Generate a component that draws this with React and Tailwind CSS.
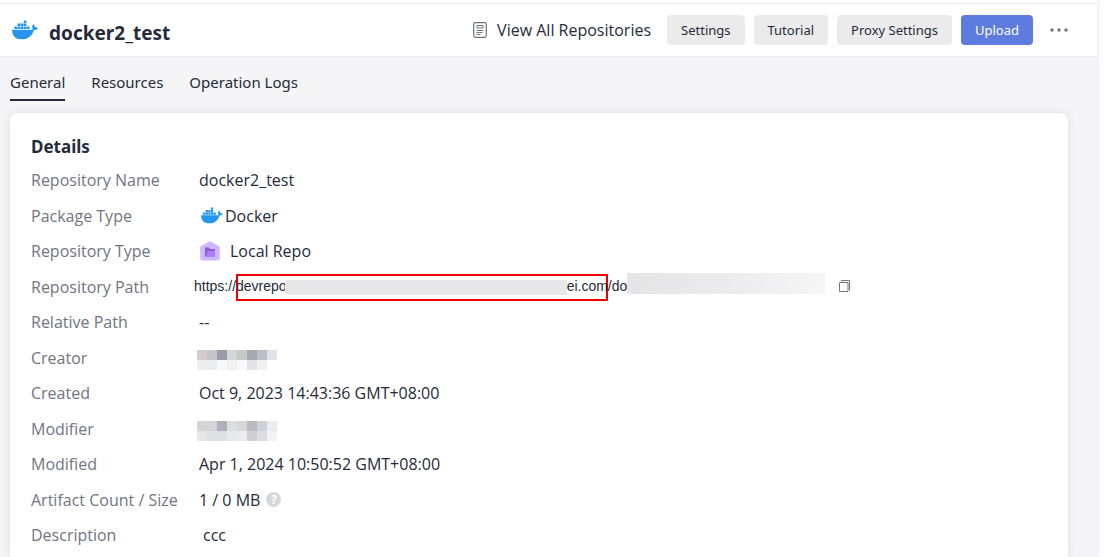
const tabs = ['General', 'Resources', 'Operation Logs'];

const creator = [
  ['#d1cdce', '#c7c5cb', '#9a9ba5', '#d4d6da', '#c7c9c7', '#a7a8b1', '#bbbec2', '#dfe2e6'],
  ['#eeeeee', '#ebecef', '#f8f8f8', '#f1f1f1', '#f7f9f8', '#e4e3e6', '#f0f0f3', '#ffffff'],
];
const modifier = [
  ['#d5d5d6', '#d5d3d8', '#adafb9', '#dcdfe2', '#d5d6d5', '#bbbac2', '#ced0d6', '#ebecf0'],
  ['#e6e6e7', '#dedfe4', '#e0e0e3', '#e7e8ea', '#ebecec', '#cfced3', '#dcdce1', '#f3f3f6'],
];

function Whale({ className }) {
  return (
    <svg viewBox="0 0 26 20" className={className} fill="#2496ed" aria-hidden="true">
      <path d="M0 9.800h18.600c1 0 1.700-.2 2.300-.6-1-1.400-1-3.400.2-4.900 1.100.7 1.800 1.800 2 3 1-.2 2.100 0 2.900.6-.7 1.500-2.100 2.100-4 2C20.200 15.700 16 19.300 9.500 19.300 3.500 19.300.2 16 0 9.800z" />
      <path d="M2.400 6.600h2.700v2.500H2.400zM5.500 6.600h2.700v2.500H5.500zM8.600 6.600h2.700v2.500H8.600zM11.700 6.600h2.700v2.500h-2.700zM14.800 6.600h2.700v2.500h-2.700zM5.500 3.600h2.700v2.500H5.500zM8.600 3.600h2.700v2.500H8.600zM11.700 3.600h2.700v2.500h-2.700zM11.700.6h2.700v2.500h-2.700z" />
    </svg>
  );
}

function LocalRepoIcon() {
  return (
    <svg viewBox="0 0 20 20" className="ml-px size-5" aria-hidden="true">
      <path d="M8.800.8a2 2 0 0 1 2.400 0l7.600 4.300c.6.400 1 1 1 1.700V17.500a2 2 0 0 1-2 2H2.200a2 2 0 0 1-2-2V6.800c0-.7.400-1.300 1-1.700z" fill="#cdb9fb" />
      <path d="M5 6.500h4l1 1.500h5v7.500H5z" fill="#8b5bdc" />
      <path d="M7.500 10h7.500v5.500H6z" fill="#ab7df3" />
    </svg>
  );
}

function Mosaic({ rows }) {
  return (
    <div className="mt-1 -ml-[2px] grid grid-cols-8">
      {rows.flat().map((c, i) => <span key={i} className="size-[10px]" style={{ backgroundColor: c }} />)}
    </div>
  );
}

function Row({ label, children }) {
  return (
    <div className="flex items-center odd:h-9 even:h-[35px]">
      <dt className="w-[168px] shrink-0 text-[#71757f]">{label}</dt>
      <dd className="flex items-center whitespace-nowrap">{children}</dd>
    </div>
  );
}

function RepoPath() {
  return (
    <div className='-ml-[5px] flex items-center font-["Liberation_Sans",Arial,sans-serif] text-sm'>
      <span className="pb-[2px]">https://</span>
      <span className="-mt-[2px] -mb-1 flex h-[27px] items-center border-2 border-[#f00000]">
        <span className="-ml-[2px] pb-[4px]">devrepo</span>
        <span className="-ml-[2px] h-[15px] w-[282px] bg-[#e8e8ea]" />
        <span className="-mr-[2px] pb-[4px]">ei.com</span>
      </span>
      <span className="pb-[2px]">/do</span>
      <span className="mb-[6px] h-[21px] w-[198px] bg-linear-to-r from-[#e5e5e7] via-[#ebebed] to-[#f6f6f7]" />
      <button aria-label="Copy path" className="mb-[2px] ml-[14px] text-[#71757f]">
        <svg viewBox="0 0 12 12" className="size-3" fill="none" stroke="currentColor" aria-hidden="true">
          <path d="M.5 2.500h8.500v9H.5zM2 .5h8.500v10" />
        </svg>
      </button>
    </div>
  );
}

export default function App() {
  return (
    <div className='min-h-screen bg-white pr-4 font-["Noto_Sans","Open_Sans",sans-serif] text-[15px] leading-5 text-[#252b3a]'>
      <div className="flex h-screen flex-col overflow-hidden bg-[#f5f5f8] shadow-[0_0_6px_rgba(0,0,0,0.12)]">
        <div className="h-1 shrink-0 border-b border-[#ebebee] bg-white" />
        <header className="flex h-[53px] shrink-0 items-center border-b border-[#ececf1] bg-white pr-7 pl-3">
          <Whale className="h-5 w-[26px]" />
          <h1 className="mt-[6px] ml-[11px] text-[19px] font-bold">docker2_test</h1>
          <a href="#" className='ml-auto flex items-center gap-[10px] font-["Open_Sans",sans-serif] text-base leading-5'>
            <svg viewBox="0 0 14 16" className="h-4 w-[14px]" fill="none" stroke="#71757f" aria-hidden="true">
              <rect x=".7" y=".7" width="12.600" height="14.600" rx="1.500" strokeWidth="1.200" />
              <path d="M4 3.500h6v2.500H4zM3.500 8.500h7M3.500 10.500h6M3.500 12.500h4" />
            </svg>
            View All Repositories
          </a>
          <button className="ml-4 h-[30px] rounded bg-[#ebebeb] px-[14px] text-[13px]">Settings</button>
          <button className="ml-[9px] h-[30px] rounded bg-[#ebebeb] px-[14px] text-[13px]">Tutorial</button>
          <button className="ml-[9px] h-[30px] rounded bg-[#ebebeb] px-[14px] text-[13px]">Proxy Settings</button>
          <button className="ml-[9px] h-[30px] rounded bg-[#5e7ce0] px-[14px] text-[13px] text-white">Upload</button>
          <button aria-label="More" className="ml-4 text-[#71757f]">
            <svg viewBox="0 0 20 4" className="h-1 w-5" fill="currentColor" aria-hidden="true">
              <circle cx="3" cy="2" r="1.700" /><circle cx="10" cy="2" r="1.700" /><circle cx="17" cy="2" r="1.700" />
            </svg>
          </button>
        </header>

        <nav className="flex shrink-0 gap-[26px] px-[10px] pt-[15px]">
          {tabs.map((t, i) => (
            <a key={t} href="#" className={i === 0 ? 'border-b-2 border-[#252b3a] pb-[7px]' : 'pb-[9px]'}>{t}</a>
          ))}
        </nav>

        <main className="mx-[10px] mt-3 mr-[29px] grow rounded-t-lg bg-white px-[21px] pt-6 shadow-[0_0_8px_rgba(37,43,58,0.12)]">
          <h2 className="text-[17px] font-bold">Details</h2>
          <dl className='mt-[5px] font-["Open_Sans",sans-serif] text-base leading-5'>
            <Row label="Repository Name">docker2_test</Row>
            <Row label="Package Type"><Whale className="mr-[2px] ml-[2px] h-[17px] w-[22px]" />Docker</Row>
            <Row label="Repository Type"><LocalRepoIcon /><span className="ml-[10px]">Local Repo</span></Row>
            <Row label="Repository Path"><RepoPath /></Row>
            <Row label="Relative Path">--</Row>
            <Row label="Creator"><Mosaic rows={creator} /></Row>
            <Row label="Created">Oct 9, 2023 14:43:36 GMT+08:00</Row>
            <Row label="Modifier"><Mosaic rows={modifier} /></Row>
            <Row label="Modified">Apr 1, 2024 10:50:52 GMT+08:00</Row>
            <Row label="Artifact Count / Size">
              1 / 0 MB
              <span className="ml-[6px] flex size-[15px] items-center justify-center rounded-full bg-[#d6d7d9] text-[12px] font-bold text-white">?</span>
            </Row>
            <Row label="Description"><span className="ml-1">ccc</span></Row>
          </dl>
        </main>
      </div>
    </div>
  );
}
